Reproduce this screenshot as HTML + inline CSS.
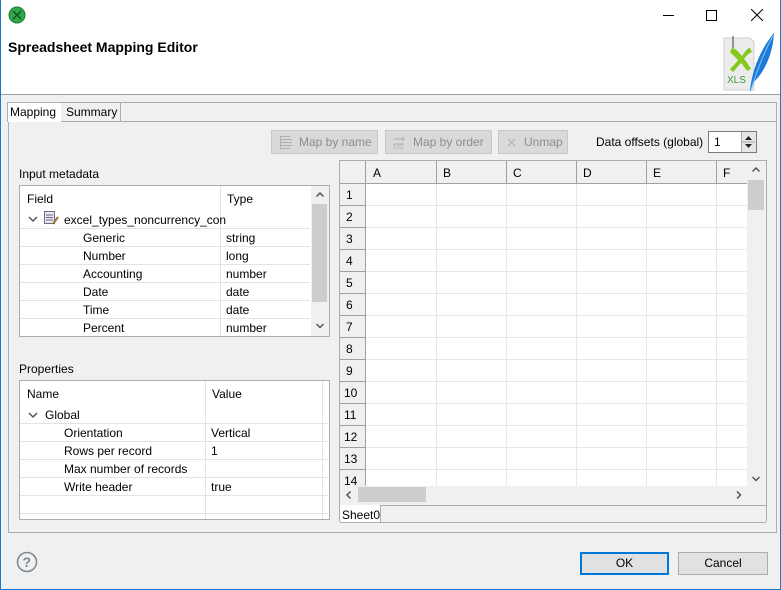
<!DOCTYPE html>
<html><head><style>
*{box-sizing:border-box;margin:0;padding:0}
body{width:781px;height:590px;position:relative;background:#f0f0f0;font-family:"Liberation Sans",sans-serif;font-size:12px;color:#000;overflow:hidden}
.a{position:absolute}
.t{position:absolute;white-space:nowrap}
.btn{position:absolute;border:1px solid #c8c8c8;background:#d9d9d9;color:#8d8d8d;height:24px;line-height:22px;font-size:12px}
.hl{position:absolute;height:1px;background:#e3e3e3}
.vl{position:absolute;width:1px;background:#e3e3e3}
</style></head><body>
<div class="a" style="left:0;top:0;width:781px;height:590px;border:1px solid #1979ca;border-top:none"></div>
<div class="a" style="left:1px;top:0;width:779px;height:95px;background:#fff;border-bottom:1px solid #a0a0a0"></div>
<svg class="a" style="left:8px;top:6px" width="18" height="18" viewBox="0 0 18 18"><circle cx="9" cy="9" r="8" fill="#2fa84a" stroke="#1d7a33"/><path d="M5 5L13 13M13 5L5 13" stroke="#115522" stroke-width="1.5"/></svg>
<div class="t" style="left:8px;top:39px;font-size:14px;font-weight:bold">Spreadsheet Mapping Editor</div>
<div class="a" style="left:663px;top:15px;width:11px;height:1px;background:#000"></div>
<div class="a" style="left:706px;top:10px;width:11px;height:11px;border:1px solid #000"></div>
<svg class="a" style="left:751px;top:9px" width="12" height="12"><path d="M0 0L12 12M12 0L0 12" stroke="#000"/></svg>
<svg class="a" style="left:718px;top:30px" width="60" height="64" viewBox="0 0 60 64">
<path d="M6 8H32L36 12V60H6z" fill="#ececec" stroke="#cfcfcf"/>
<path d="M14 18c4 0 8 6 10 8 3-4 5-8 8-8l2 4c-3 1-6 4-8 7 3 3 5 7 7 10l-4 2c-2-3-4-6-6-8-3 3-5 6-8 9l-3-3c3-3 6-6 8-9-2-2-6-6-8-8z" fill="#86c81c"/>
<path d="M15 6v12" stroke="#777" stroke-width="1.5" fill="none"/>
<text x="9" y="53" font-family="Liberation Sans" font-size="10" fill="#3a9a3a">XLS</text>
<path d="M32 62C33 46 40 22 56 3 55 22 48 40 36 52z" fill="#1c79d6"/>
<path d="M33 60C38 44 46 22 55 6" stroke="#7fc4ff" fill="none"/>
</svg>
<div class="a" style="left:8px;top:102px;width:769px;height:431px;border:1px solid #adadad;background:#f0f0f0"></div>
<div class="a" style="left:7px;top:121px;width:770px;height:1px;background:#adadad"></div>
<div class="a" style="left:7px;top:102px;width:55px;height:20px;background:#fff;border:1px solid #adadad;border-bottom:none"></div>
<div class="t" style="left:10px;top:105px">Mapping</div>
<div class="a" style="left:61px;top:102px;width:60px;height:19px;background:#f0f0f0;border:1px solid #adadad;border-bottom:none;border-left:none"></div>
<div class="t" style="left:66px;top:105px">Summary</div>
<div class="btn" style="left:271px;top:130px;width:107px;padding-left:27px">Map by name</div>
<div class="btn" style="left:385px;top:130px;width:107px;padding-left:27px">Map by order</div>
<div class="btn" style="left:498px;top:130px;width:70px;padding-left:25px">Unmap</div>
<svg class="a" style="left:279px;top:135px" width="14" height="14"><path d="M1 1.5H11M1 4.5H13M1 7.5H13M1 10.5H13M1 13.5H11M1.5 1V14" stroke="#b0b0b0" fill="none"/></svg>
<svg class="a" style="left:392px;top:135px" width="16" height="14"><path d="M2 4H12M10 2L12 4 10 6M2 9H12" stroke="#b0b0b0" fill="none"/><text x="1" y="14" font-size="6" fill="#b0b0b0" font-family="Liberation Sans">123</text></svg>
<svg class="a" style="left:507px;top:138px" width="9" height="9"><path d="M1 1L8 8M8 1L1 8" stroke="#b0b0b0"/></svg>
<div class="t" style="left:596px;top:135px">Data offsets (global)</div>
<div class="a" style="left:708px;top:131px;width:49px;height:22px;background:#fff;border:1px solid #7a7a7a"></div>
<div class="t" style="left:714px;top:135px">1</div>
<div class="a" style="left:741px;top:132px;width:15px;height:20px;background:#e6e6e6;border-left:1px solid #aaa"></div>
<svg class="a" style="left:741px;top:132px" width="15" height="20"><path d="M4 8L7.5 4 11 8z M4 12L7.5 16 11 12z" fill="#222"/><path d="M1 10H14" stroke="#aaa"/></svg>
<div class="t" style="left:19px;top:167px">Input metadata</div>
<div class="a" style="left:19px;top:185px;width:311px;height:152px;border:1px solid #adadad;background:#fff"></div>
<div class="vl" style="left:220px;top:186px;height:150px"></div>
<div class="t" style="left:27px;top:192px">Field</div>
<div class="t" style="left:227px;top:192px">Type</div>
<svg class="a" style="left:28px;top:215px" width="10" height="8"><path d="M1 2L5 6 9 2" stroke="#555" stroke-width="1.5" fill="none"/></svg>
<svg class="a" style="left:43px;top:210px" width="16" height="16"><rect x="1.5" y="1.5" width="10" height="12" fill="#e8e8f4" stroke="#6a6a80"/><path d="M3 5H10M3 7.5H10M3 10H10" stroke="#6a6a80"/><path d="M10 14L15 7" stroke="#a07030" stroke-width="2"/></svg>
<div class="t" style="left:64px;top:213px">excel_types_noncurrency_con</div>
<div class="hl" style="left:20px;top:228px;width:290px"></div>
<div class="hl" style="left:20px;top:246px;width:290px"></div>
<div class="hl" style="left:20px;top:264px;width:290px"></div>
<div class="hl" style="left:20px;top:282px;width:290px"></div>
<div class="hl" style="left:20px;top:300px;width:290px"></div>
<div class="hl" style="left:20px;top:318px;width:290px"></div>
<div class="t" style="left:83px;top:231px">Generic</div><div class="t" style="left:226px;top:231px">string</div>
<div class="t" style="left:83px;top:249px">Number</div><div class="t" style="left:226px;top:249px">long</div>
<div class="t" style="left:83px;top:267px">Accounting</div><div class="t" style="left:226px;top:267px">number</div>
<div class="t" style="left:83px;top:285px">Date</div><div class="t" style="left:226px;top:285px">date</div>
<div class="t" style="left:83px;top:303px">Time</div><div class="t" style="left:226px;top:303px">date</div>
<div class="t" style="left:83px;top:321px">Percent</div><div class="t" style="left:226px;top:321px">number</div>
<div class="a" style="left:311px;top:186px;width:18px;height:150px;background:#f0f0f0"></div>
<div class="a" style="left:312px;top:204px;width:15px;height:98px;background:#cdcdcd"></div>
<svg class="a" style="left:315px;top:191px" width="10" height="8"><path d="M1.5 5.5L5 2 8.5 5.5" stroke="#555" stroke-width="1.5" fill="none"/></svg>
<svg class="a" style="left:315px;top:322px" width="10" height="8"><path d="M1.5 2L5 5.5 8.5 2" stroke="#555" stroke-width="1.5" fill="none"/></svg>
<div class="t" style="left:19px;top:362px">Properties</div>
<div class="a" style="left:19px;top:380px;width:311px;height:140px;border:1px solid #adadad;background:#fff"></div>
<div class="vl" style="left:205px;top:381px;height:138px"></div>
<div class="vl" style="left:322px;top:381px;height:138px"></div>
<div class="t" style="left:27px;top:387px">Name</div>
<div class="t" style="left:212px;top:387px">Value</div>
<svg class="a" style="left:28px;top:411px" width="10" height="8"><path d="M1 2L5 6 9 2" stroke="#555" stroke-width="1.5" fill="none"/></svg>
<div class="t" style="left:45px;top:408px">Global</div>
<div class="hl" style="left:20px;top:423px;width:308px"></div>
<div class="hl" style="left:20px;top:441px;width:308px"></div>
<div class="hl" style="left:20px;top:459px;width:308px"></div>
<div class="hl" style="left:20px;top:477px;width:308px"></div>
<div class="hl" style="left:20px;top:495px;width:308px"></div>
<div class="hl" style="left:20px;top:513px;width:308px"></div>
<div class="t" style="left:64px;top:426px">Orientation</div><div class="t" style="left:211px;top:426px">Vertical</div>
<div class="t" style="left:64px;top:444px">Rows per record</div><div class="t" style="left:211px;top:444px">1</div>
<div class="t" style="left:64px;top:462px">Max number of records</div>
<div class="t" style="left:64px;top:480px">Write header</div><div class="t" style="left:211px;top:480px">true</div>
<div class="a" style="left:339px;top:160px;width:428px;height:363px;border:1px solid #adadad;border-radius:0 0 3px 3px;background:#f0f0f0"></div>
<svg class="a" style="left:340px;top:161px" width="407" height="325">
<rect width="407" height="325" fill="#fff"/>
<rect width="407" height="22" fill="#f0f0f0"/>
<rect width="26" height="325" fill="#f0f0f0"/>
<g stroke="#e8e8e8">
<path d="M26 44.5H407M26 66.5H407M26 88.5H407M26 110.5H407M26 132.5H407M26 154.5H407M26 176.5H407M26 198.5H407M26 220.5H407M26 242.5H407M26 264.5H407M26 286.5H407M26 308.5H407"/>
<path d="M96.5 22V325M166.5 22V325M236.5 22V325M306.5 22V325M376.5 22V325"/>
</g>
<g stroke="#a0a0a0">
<path d="M0 22.5H26M0 44.5H26M0 66.5H26M0 88.5H26M0 110.5H26M0 132.5H26M0 154.5H26M0 176.5H26M0 198.5H26M0 220.5H26M0 242.5H26M0 264.5H26M0 286.5H26M0 308.5H26"/>
<path d="M25.5 0V325M96.5 0V22M166.5 0V22M236.5 0V22M306.5 0V22M376.5 0V22M0 22.5H407"/>
</g>
<g font-family="Liberation Sans" font-size="12">
<text x="33" y="16">A</text><text x="103" y="16">B</text><text x="173" y="16">C</text><text x="243" y="16">D</text><text x="313" y="16">E</text><text x="383" y="16">F</text>
<text x="6" y="38">1</text><text x="6" y="60">2</text><text x="6" y="82">3</text><text x="6" y="104">4</text><text x="6" y="126">5</text><text x="6" y="148">6</text><text x="6" y="170">7</text><text x="6" y="192">8</text><text x="6" y="214">9</text><text x="4" y="236">10</text><text x="4" y="258">11</text><text x="4" y="280">12</text><text x="4" y="302">13</text><text x="4" y="324">14</text>
</g></svg>
<div class="a" style="left:747px;top:161px;width:19px;height:325px;background:#f0f0f0"></div>
<div class="a" style="left:748px;top:180px;width:16px;height:30px;background:#cdcdcd"></div>
<svg class="a" style="left:751px;top:166px" width="10" height="8"><path d="M1.5 5.5L5 2 8.5 5.5" stroke="#555" stroke-width="1.5" fill="none"/></svg>
<svg class="a" style="left:751px;top:475px" width="10" height="8"><path d="M1.5 2L5 5.5 8.5 2" stroke="#555" stroke-width="1.5" fill="none"/></svg>
<div class="a" style="left:340px;top:486px;width:407px;height:17px;background:#f0f0f0"></div>
<div class="a" style="left:358px;top:487px;width:68px;height:15px;background:#cdcdcd"></div>
<svg class="a" style="left:345px;top:490px" width="8" height="10"><path d="M5.5 1.5L2 5 5.5 8.5" stroke="#555" stroke-width="1.5" fill="none"/></svg>
<svg class="a" style="left:735px;top:490px" width="8" height="10"><path d="M2 1.5L5.5 5 2 8.5" stroke="#555" stroke-width="1.5" fill="none"/></svg>
<div class="a" style="left:340px;top:505px;width:426px;height:1px;background:#adadad"></div>
<div class="a" style="left:339px;top:505px;width:42px;height:18px;background:#fff;border:1px solid #adadad;border-top:none;border-radius:0 0 0 3px"></div>
<div class="t" style="left:342px;top:508px">Sheet0</div>
<svg class="a" style="left:16px;top:551px" width="22" height="22"><circle cx="11" cy="11" r="9.5" fill="none" stroke="#7a8796" stroke-width="1.5"/><text x="6.5" y="16" font-family="Liberation Sans" font-size="14" font-weight="bold" fill="#7a8796">?</text></svg>
<div class="a" style="left:580px;top:552px;width:89px;height:23px;border:2px solid #0078d7;background:#e1e1e1;text-align:center;line-height:19px">OK</div>
<div class="a" style="left:678px;top:552px;width:90px;height:23px;border:1px solid #adadad;background:#e1e1e1;text-align:center;line-height:21px">Cancel</div>
</body></html>
